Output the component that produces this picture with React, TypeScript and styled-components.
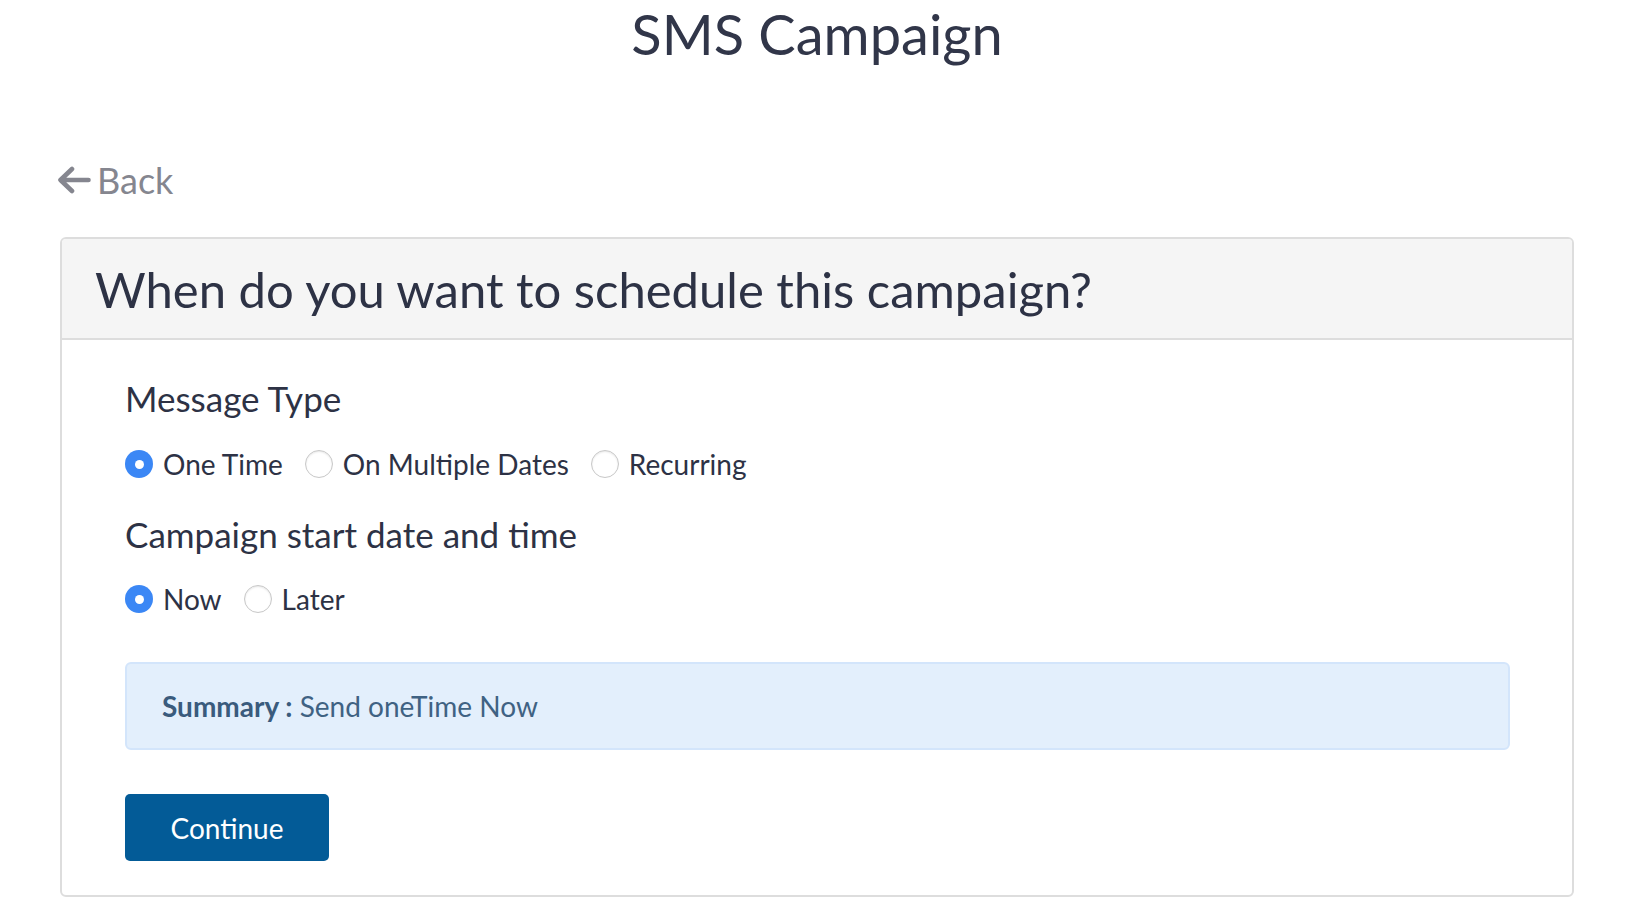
import React, { useState } from 'react'
import styled, { createGlobalStyle } from 'styled-components'

const GlobalStyle = createGlobalStyle`
  body {
    margin: 0;
    background: #ffffff;
    font-family: Lato, 'Open Sans', 'Liberation Sans', sans-serif;
    color: #333850;
  }
`

const Page = styled.div`
  padding: 0 59px 0 60px;
`

const Title = styled.h1`
  margin: 0;
  text-align: center;
  font-size: 56px;
  font-weight: 400;
  line-height: normal;
  color: #313649;
`

const BackLink = styled.a`
  display: inline-flex;
  align-items: center;
  gap: 6px;
  margin-top: 91px;
  margin-left: -2px;
  font-size: 36px;
  line-height: normal;
  color: #85868f;
  cursor: pointer;
  text-decoration: none;
`

const Card = styled.section`
  margin-top: 35px;
  border: 2px solid #dddddd;
  border-radius: 6px;
  overflow: hidden;
`

const CardHeader = styled.header`
  background: #f5f5f5;
  border-bottom: 2px solid #dddddd;
  padding: 20.5px 33px;
`

const Heading = styled.h2`
  margin: 0;
  font-size: 49px;
  font-weight: 400;
  line-height: normal;
  color: #2d3245;
`

const CardBody = styled.div`
  display: flex;
  flex-direction: column;
  align-items: flex-start;
  padding: 0 62px 34px 63px;
`

const Label = styled.h3<{ $top: number }>`
  margin: ${p => p.$top}px 0 0;
  font-size: 35px;
  font-weight: 400;
  line-height: normal;
  color: #2d3245;
`

const RadioGroup = styled.div<{ $top: number }>`
  display: flex;
  align-items: center;
  gap: 22px;
  margin-top: ${p => p.$top}px;
`

const Option = styled.label`
  display: flex;
  align-items: center;
  gap: 10px;
  font-size: 28px;
  line-height: 34px;
  color: #2d3245;
  cursor: pointer;
`

const Dot = styled.span<{ $checked: boolean }>`
  box-sizing: border-box;
  width: 28px;
  height: 28px;
  border-radius: 50%;
  flex: none;
  display: flex;
  align-items: center;
  justify-content: center;
  background: ${p => (p.$checked ? '#3b87f5' : '#ffffff')};
  border: ${p => (p.$checked ? 'none' : '1.5px solid #c8c8c8')};
  box-shadow: ${p => (p.$checked ? 'none' : 'inset 0 1px 2px rgba(0,0,0,0.1)')};
  &::after {
    content: '';
    display: ${p => (p.$checked ? 'block' : 'none')};
    width: 9px;
    height: 9px;
    border-radius: 50%;
    background: #ffffff;
  }
`

const Summary = styled.div`
  box-sizing: border-box;
  align-self: stretch;
  margin-top: 46px;
  height: 88px;
  display: flex;
  align-items: center;
  padding: 0 35px;
  background: #e3effc;
  border: 2px solid #d3e5fb;
  border-radius: 6px;
  font-size: 28px;
  color: #3f6283;
  b {
    font-weight: 700;
    color: #3a5b7d;
  }
`

const ContinueButton = styled.button`
  margin-top: 44px;
  width: 204px;
  height: 67px;
  border: none;
  border-radius: 5px;
  background: #035b97;
  color: #ffffff;
  font-family: inherit;
  font-size: 28px;
  cursor: pointer;
`

const BackArrow = () => (
  <svg width="33" height="30" viewBox="0 0 33 30" fill="none">
    <path
      d="M30.5 15H3M14 4L2.5 15L14 26"
      stroke="currentColor"
      strokeWidth="4.6"
      strokeLinecap="round"
      strokeLinejoin="round"
    />
  </svg>
)

const typeOptions = [
  { value: 'oneTime', label: 'One Time' },
  { value: 'multiple', label: 'On Multiple Dates' },
  { value: 'recurring', label: 'Recurring' },
]

const startOptions = [
  { value: 'Now', label: 'Now' },
  { value: 'Later', label: 'Later' },
]

export default function App() {
  const [type, setType] = useState('oneTime')
  const [start, setStart] = useState('Now')

  return (
    <Page>
      <GlobalStyle />
      <Title>SMS Campaign</Title>
      <BackLink>
        <BackArrow />
        Back
      </BackLink>
      <Card>
        <CardHeader>
          <Heading>When do you want to schedule this campaign?</Heading>
        </CardHeader>
        <CardBody>
          <Label $top={37}>Message Type</Label>
          <RadioGroup $top={28}>
            {typeOptions.map(o => (
              <Option key={o.value} onClick={() => setType(o.value)}>
                <Dot $checked={type === o.value} />
                {o.label}
              </Option>
            ))}
          </RadioGroup>
          <Label $top={32}>Campaign start date and time</Label>
          <RadioGroup $top={27}>
            {startOptions.map(o => (
              <Option key={o.value} onClick={() => setStart(o.value)}>
                <Dot $checked={start === o.value} />
                {o.label}
              </Option>
            ))}
          </RadioGroup>
          <Summary>
            <b>Summary :</b>&nbsp;Send {type} {start}
          </Summary>
          <ContinueButton>Continue</ContinueButton>
        </CardBody>
      </Card>
    </Page>
  )
}
